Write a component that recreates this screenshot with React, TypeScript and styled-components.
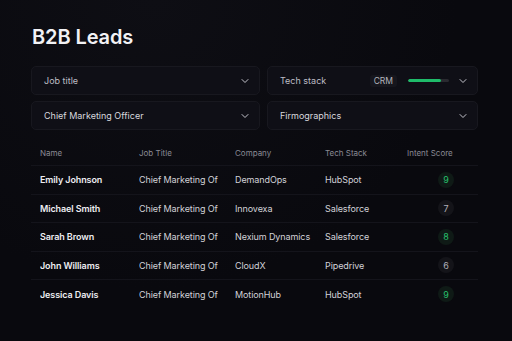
import React from "react"
import styled, { createGlobalStyle } from "styled-components"

const GlobalStyle = createGlobalStyle`
  * { box-sizing: border-box; }
  html, body { margin: 0; padding: 0; background: #09090e; }
  body { font-family: Inter, "Noto Sans", sans-serif; color: #e6e6ea; }
`

const leads = [
  { name: "Emily Johnson", title: "Chief Marketing Of", company: "DemandOps", stack: "HubSpot", score: 9 },
  { name: "Michael Smith", title: "Chief Marketing Of", company: "Innovexa", stack: "Salesforce", score: 7 },
  { name: "Sarah Brown", title: "Chief Marketing Of", company: "Nexium Dynamics", stack: "Salesforce", score: 8 },
  { name: "John Williams", title: "Chief Marketing Of", company: "CloudX", stack: "Pipedrive", score: 6 },
  { name: "Jessica Davis", title: "Chief Marketing Of", company: "MotionHub", stack: "HubSpot", score: 9 },
]

function Chevron() {
  return (
    <ChevronIcon width="12" height="12" viewBox="0 0 24 24" fill="none">
      <path d="M6 9l6 6 6-6" stroke="#c4c4cc" strokeWidth="2" strokeLinecap="round" strokeLinejoin="round" />
    </ChevronIcon>
  )
}

export default function App() {
  return (
    <Page>
      <GlobalStyle />
      <Title>B2B Leads</Title>
      <Filters>
        <Select>
          <SelectLabel $muted>Job title</SelectLabel>
          <Chevron />
        </Select>
        <Select>
          <SelectLabel $muted>Tech stack</SelectLabel>
          <StackRight>
            <Chip>CRM</Chip>
            <Track>
              <Fill style={{ width: "80%" }} />
            </Track>
            <Chevron />
          </StackRight>
        </Select>
        <Select>
          <SelectLabel>Chief Marketing Officer</SelectLabel>
          <Chevron />
        </Select>
        <Select>
          <SelectLabel>Firmographics</SelectLabel>
          <Chevron />
        </Select>
      </Filters>
      <Table>
        <HeadRow>
          <HeadCell>Name</HeadCell>
          <HeadCell>Job Title</HeadCell>
          <HeadCell>Company</HeadCell>
          <HeadCell>Tech Stack</HeadCell>
          <HeadCell>Intent Score</HeadCell>
        </HeadRow>
        {leads.map((l) => (
          <Row key={l.name}>
            <NameCell>{l.name}</NameCell>
            <Cell>{l.title}</Cell>
            <Cell>{l.company}</Cell>
            <Cell>{l.stack}</Cell>
            <ScoreCell>
              <Score $high={l.score >= 8}>{l.score}</Score>
            </ScoreCell>
          </Row>
        ))}
      </Table>
    </Page>
  )
}

const Page = styled.div`
  width: 512px;
  height: 341px;
  padding: 24px 34px 0 31px;
  background: radial-gradient(ellipse at 30% 0%, #0e0e14 0%, #09090e 60%);
`

const Title = styled.h1`
  margin: 0 0 16px 1px;
  font-size: 20px;
  font-weight: 600;
  letter-spacing: -0.1px;
  color: #f2f2f5;
  line-height: 26px;
`

const Filters = styled.div`
  display: grid;
  grid-template-columns: 229px 211px;
  column-gap: 7px;
  row-gap: 6px;
`

const Select = styled.div`
  height: 29px;
  display: flex;
  align-items: center;
  justify-content: space-between;
  padding: 0 8px 0 12px;
  background: #0f0f16;
  border: 1px solid #18181f;
  border-radius: 5px;
`

const SelectLabel = styled.span<{ $muted?: boolean }>`
  font-size: 9px;
  color: ${(p) => (p.$muted ? "#bdbdc5" : "#d8d8de")};
`

const StackRight = styled.div`
  display: flex;
  align-items: center;
`

const Chip = styled.span`
  font-size: 8.5px;
  line-height: 12px;
  color: #b4b4bc;
  background: #16161d;
  padding: 0 4px;
  border-radius: 3px;
  margin-right: 11px;
`

const Track = styled.div`
  width: 41px;
  height: 3px;
  background: #2a2a30;
  border-radius: 2px;
  margin-right: 8px;
  overflow: hidden;
`

const Fill = styled.div`
  height: 100%;
  background: #1fbb6a;
  border-radius: 2px;
`

const ChevronIcon = styled.svg`
  display: block;
`

const Table = styled.div`
  margin-top: 10px;
  width: 447px;
`

const HeadRow = styled.div`
  display: grid;
  grid-template-columns: 99px 96px 90px 82px 1fr;
  height: 26px;
  align-items: center;
  padding-left: 9px;
  border-bottom: 1px solid #14141b;
`

const Row = styled(HeadRow)`
  height: 28.5px;
  &:last-child { border-bottom: none; }
`

const HeadCell = styled.span`
  font-size: 8px;
  color: #8a8a94;
`

const Cell = styled.span`
  font-size: 9px;
  letter-spacing: -0.1px;
  color: #d2d2d8;
  white-space: nowrap;
  overflow: hidden;
`

const NameCell = styled(Cell)`
  font-weight: 600;
  color: #eeeef2;
`

const ScoreCell = styled.div`
  padding-left: 31px;
`

const Score = styled.span<{ $high: boolean }>`
  display: flex;
  align-items: center;
  justify-content: center;
  width: 16px;
  height: 16px;
  border-radius: 50%;
  font-size: 9px;
  background: ${(p) => (p.$high ? "#0f1a16" : "#141419")};
  color: ${(p) => (p.$high ? "#27c06c" : "#b0b0b8")};
`
